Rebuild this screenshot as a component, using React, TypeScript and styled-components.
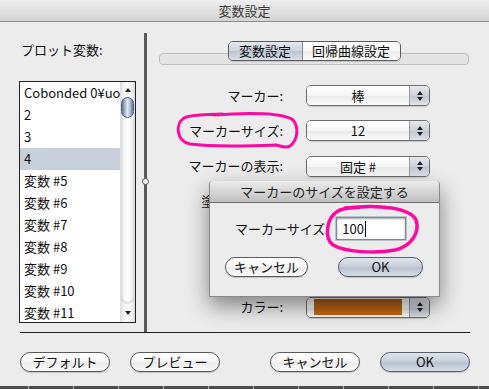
import styled, { createGlobalStyle } from "styled-components";

const GlobalStyle = createGlobalStyle`
  html, body {
    margin: 0;
    padding: 0;
  }
  body {
    background: #ececec;
    font-family: "Noto Sans CJK JP", "DejaVu Sans", sans-serif;
    font-size: 13px;
    color: #111;
    overflow: hidden;
  }
`;

const Window = styled.div`
  position: relative;
  width: 489px;
  height: 389px;
  display: flex;
  flex-direction: column;
  background: #ececec;
`;

const TitleBar = styled.div`
  height: 21px;
  line-height: 21px;
  border-bottom: 1px solid #8e8e8e;
  background: linear-gradient(#eeeeee, #dedede 60%, #d3d3d3);
  text-align: center;
  color: #3a3a3a;
`;

const Main = styled.div`
  padding: 11px 19px 0 20px;
`;

const Split = styled.div`
  display: flex;
  height: 299px;
  border-bottom: 1px solid #1c1c1c;
`;

const LeftPane = styled.div`
  width: 124px;
  display: flex;
  flex-direction: column;
`;

const PaneLabel = styled.div`
  margin: 9px 0 0 1px;
  line-height: 16px;
`;

const VarList = styled.div`
  margin: 23px 0 0 -1px;
  width: 117px;
  height: 242px;
  box-sizing: border-box;
  border: 1px solid #222;
  background: #fff;
  display: flex;
`;

const Rows = styled.div`
  flex: 1;
  overflow: hidden;
`;

const Row = styled.div<{ $selected?: boolean }>`
  height: 22px;
  line-height: 22px;
  padding-left: 4px;
  white-space: nowrap;
  overflow: hidden;
  background: ${(p) => (p.$selected ? "#c8d0dc" : "transparent")};
`;

const Scrollbar = styled.div`
  width: 15px;
  display: flex;
  flex-direction: column;
  background: linear-gradient(90deg, #dcdcdc 0, #f7f7f7 30%, #ffffff 55%, #ececec 85%, #d6d6d6);
`;

const ArrowCap = styled.div<{ $h: number }>`
  height: ${(p) => p.$h}px;
  display: flex;
  align-items: center;
  justify-content: center;
`;

const Tri = styled.span<{ $down?: boolean; $size?: number }>`
  width: 0;
  height: 0;
  border-left: ${(p) => p.$size ?? 3}px solid transparent;
  border-right: ${(p) => p.$size ?? 3}px solid transparent;
  ${(p) =>
    p.$down
      ? `border-top: ${(p.$size ?? 3) + 1}px solid #222;`
      : `border-bottom: ${(p.$size ?? 3) + 1}px solid #222;`}
`;

const Thumb = styled.div`
  height: 21px;
  margin: 0 1px;
  box-sizing: border-box;
  border: 1px solid #4f5f78;
  border-radius: 7px;
  background: linear-gradient(90deg, #5e7391 0%, #a2b4ca 25%, #e2e9f2 50%, #a9bacf 75%, #617695 100%);
`;

const Track = styled.div`
  flex: 1;
  margin: 0 1px;
  border-radius: 0 0 7px 7px;
  box-shadow: inset 0 -2px 2px rgba(0, 0, 0, 0.12);
`;

const Divider = styled.div`
  position: relative;
  width: 3px;
  background: #5a5a5a;

  &::after {
    content: "";
    position: absolute;
    top: 145px;
    left: -2px;
    width: 5px;
    height: 5px;
    border-radius: 50%;
    background: #f4f4f4;
    border: 1px solid #555;
  }
`;

const RightPane = styled.div`
  position: relative;
  flex: 1;
  padding: 0 1px 0 12px;
`;

const TabStrip = styled.div`
  display: grid;
  margin-top: 8px;
`;

const TabBar = styled.div`
  grid-area: 1 / 1;
  margin-top: 12px;
  height: 12px;
  box-sizing: border-box;
  border: 1px solid #bdbdbd;
  border-radius: 4px;
  background: #e4e4e4;
`;

const Segmented = styled.div`
  grid-area: 1 / 1;
  justify-self: center;
  align-self: start;
  display: flex;
  height: 20px;
  box-sizing: border-box;
  border: 1px solid #5c5c5c;
  border-radius: 5px;
  overflow: hidden;
  box-shadow: 0 1px 1px rgba(0, 0, 0, 0.15);
`;

const Segment = styled.div<{ $selected?: boolean; $w: number }>`
  width: ${(p) => p.$w}px;
  line-height: 18px;
  text-align: center;
  & + & {
    border-left: 1px solid #8a8a8a;
  }
  background: ${(p) =>
    p.$selected
      ? "linear-gradient(#e4e9f0, #ccd4df 50%, #bcc6d3 51%, #d8dee7)"
      : "linear-gradient(#ffffff, #f6f6f6 50%, #ebebeb 51%, #fbfbfb)"};
`;

const Form = styled.div`
  display: grid;
  grid-template-columns: 124px 124px;
  grid-auto-rows: 21px;
  column-gap: 23px;
  row-gap: 14.33px;
  margin-top: 20px;
  align-items: center;
`;

const FieldLabel = styled.div`
  justify-self: end;
  white-space: nowrap;
  line-height: 16px;
`;

const Popup = styled.div`
  display: flex;
  height: 21px;
  box-sizing: border-box;
  border: 1px solid #6d6d6d;
  border-radius: 5px;
  overflow: hidden;
  box-shadow: 0 1px 1px rgba(0, 0, 0, 0.15);
`;

const PopupValue = styled.div`
  flex: 1;
  display: flex;
  align-items: stretch;
  justify-content: center;
  line-height: 19px;
  background: linear-gradient(#ffffff, #f5f5f5 50%, #e9e9e9 51%, #fbfbfb);
`;

const PopupArrows = styled.div`
  width: 19px;
  border-left: 1px solid #9a9a9a;
  display: flex;
  flex-direction: column;
  align-items: center;
  justify-content: center;
  gap: 2px;
  background: linear-gradient(#e6e9ee, #ccd2db 50%, #bfc6d1 51%, #dfe3e9);
`;

const Swatch = styled.div<{ $color: string }>`
  flex: 1;
  margin: 1px 7px 2px;
  background: ${(p) => p.$color};
`;

const PillButton = styled.div<{ $w: number; $primary?: boolean }>`
  width: ${(p) => p.$w}px;
  height: 20px;
  box-sizing: border-box;
  border: 1px solid ${(p) => (p.$primary ? "#55606f" : "#5a5a5a")};
  border-radius: 10px;
  line-height: 18px;
  text-align: center;
  box-shadow: 0 1px 1px rgba(0, 0, 0, 0.18);
  background: ${(p) =>
    p.$primary
      ? "linear-gradient(#dfe5ec, #c8d0db 45%, #b7c2cf 55%, #d6dde6)"
      : "linear-gradient(#ffffff, #f7f7f7 45%, #eaeaea 55%, #fcfcfc)"};
`;

const ButtonRow = styled.div`
  display: flex;
  justify-content: space-between;
  margin-top: 19px;
`;

const ButtonGroup = styled.div`
  display: flex;
  gap: 20px;
`;

const Spacer = styled.div`
  flex: 1;
`;

const DesktopStrip = styled.div`
  height: 3px;
  background-color: #4d4d4d;
  background-image: repeating-linear-gradient(
    90deg,
    transparent 0 28px,
    #b4b4b4 28px 29px,
    transparent 29px 45px
  );
`;

const Sheet = styled.div`
  position: absolute;
  left: 62px;
  top: 148px;
  width: 231px;
  height: 116px;
  box-sizing: border-box;
  background: #ececec;
  border: 1px solid #8a8a8a;
  border-top: none;
  border-radius: 4px 4px 0 0;
  box-shadow: 0 9px 22px rgba(0, 0, 0, 0.45);
  display: flex;
  flex-direction: column;
`;

const SheetTitle = styled.div`
  height: 21px;
  line-height: 21px;
  border-bottom: 1px solid #6e6e6e;
  border-radius: 4px 4px 0 0;
  background: linear-gradient(#ececec, #d3d3d3 55%, #bfbfbf);
  text-align: center;
  color: #222;
`;

const SheetRow = styled.div<{ $top: number; $left: number; $gap: number }>`
  display: flex;
  align-items: center;
  margin-top: ${(p) => p.$top}px;
  padding-left: ${(p) => p.$left}px;
  gap: ${(p) => p.$gap}px;
`;

const TextField = styled.div`
  width: 70px;
  height: 23px;
  box-sizing: border-box;
  border: 1px solid #7f8792;
  box-shadow: 0 0 0 1px #b9c3cf, inset 0 1px 2px rgba(0, 0, 0, 0.35);
  background: #fff;
  display: flex;
  align-items: center;
  padding-left: 5px;
  line-height: 16px;
`;

const Caret = styled.span`
  display: inline-block;
  width: 1px;
  height: 16px;
  margin-left: 1px;
  background: #000;
`;

const Annotations = styled.svg`
  position: absolute;
  top: 0;
  left: 0;
  pointer-events: none;
`;

const variables = [
  "Cobonded 0¥uo 1",
  "2",
  "3",
  "4",
  "変数 #5",
  "変数 #6",
  "変数 #7",
  "変数 #8",
  "変数 #9",
  "変数 #10",
  "変数 #11",
];

// rows 4-6 sit under the sheet; only the start of row 4's label peeks out
const fields: { label: string; value?: string; color?: string }[] = [
  { label: "マーカー:", value: "棒" },
  { label: "マーカーサイズ:", value: "12" },
  { label: "マーカーの表示:", value: "固定 #" },
  { label: "塗りつぶし色:" },
  { label: "" },
  { label: "" },
  { label: "カラー:", color: "linear-gradient(#a65a11, #c56b15)" },
];

export default function App() {
  return (
    <>
      <GlobalStyle />
      <Window>
        <TitleBar>変数設定</TitleBar>
        <Main>
          <Split>
            <LeftPane>
              <PaneLabel>プロット変数:</PaneLabel>
              <VarList>
                <Rows>
                  {variables.map((v) => (
                    <Row key={v} $selected={v === "4"}>
                      {v}
                    </Row>
                  ))}
                </Rows>
                <Scrollbar>
                  <ArrowCap $h={15}>
                    <Tri $size={3} />
                  </ArrowCap>
                  <Thumb />
                  <Track />
                  <ArrowCap $h={18}>
                    <Tri $down $size={3} />
                  </ArrowCap>
                </Scrollbar>
              </VarList>
            </LeftPane>
            <Divider />
            <RightPane>
              <TabStrip>
                <TabBar />
                <Segmented>
                  <Segment $selected $w={73}>
                    変数設定
                  </Segment>
                  <Segment $w={97}>回帰曲線設定</Segment>
                </Segmented>
              </TabStrip>
              <Form>
                {fields.map((f, i) => (
                  <>
                    <FieldLabel key={"l" + i}>{f.label}</FieldLabel>
                    <Popup key={"p" + i}>
                      <PopupValue>
                        {f.color ? <Swatch $color={f.color} /> : f.value}
                      </PopupValue>
                      <PopupArrows>
                        <Tri $size={3} />
                        <Tri $down $size={3} />
                      </PopupArrows>
                    </Popup>
                  </>
                ))}
              </Form>
              <Sheet>
                <SheetTitle>マーカーのサイズを設定する</SheetTitle>
                <SheetRow $top={14} $left={25} $gap={11}>
                  <span>マーカーサイズ</span>
                  <TextField>
                    100
                    <Caret />
                  </TextField>
                </SheetRow>
                <SheetRow $top={17} $left={15} $gap={30}>
                  <PillButton $w={83}>キャンセル</PillButton>
                  <PillButton $w={85} $primary>
                    OK
                  </PillButton>
                </SheetRow>
              </Sheet>
            </RightPane>
          </Split>
          <ButtonRow>
            <ButtonGroup>
              <PillButton $w={90}>デフォルト</PillButton>
              <PillButton $w={90}>プレビュー</PillButton>
            </ButtonGroup>
            <ButtonGroup>
              <PillButton $w={90}>キャンセル</PillButton>
              <PillButton $w={90} $primary>
                OK
              </PillButton>
            </ButtonGroup>
          </ButtonRow>
        </Main>
        <Spacer />
        <DesktopStrip />
        <Annotations width="489" height="389" viewBox="0 0 489 389">
          <path
            d="M 214 115 C 250 112, 284 113, 293 120 C 299 127, 298 140, 290 146 C 286 149, 282 146, 276 145 C 250 146, 212 147, 190 144 C 176 141, 175 124, 184 118 C 192 114, 204 115, 222 114"
            fill="none"
            stroke="#ff0aa0"
            strokeWidth="3"
            strokeLinecap="round"
          />
          <path
            d="M 345 208 C 380 204, 410 208, 416 220 C 420 232, 412 246, 395 250 C 375 254, 345 252, 333 245 C 324 238, 326 218, 338 211 C 342 208, 350 208, 362 207"
            fill="none"
            stroke="#ff0aa0"
            strokeWidth="3.5"
            strokeLinecap="round"
          />
        </Annotations>
      </Window>
    </>
  );
}
